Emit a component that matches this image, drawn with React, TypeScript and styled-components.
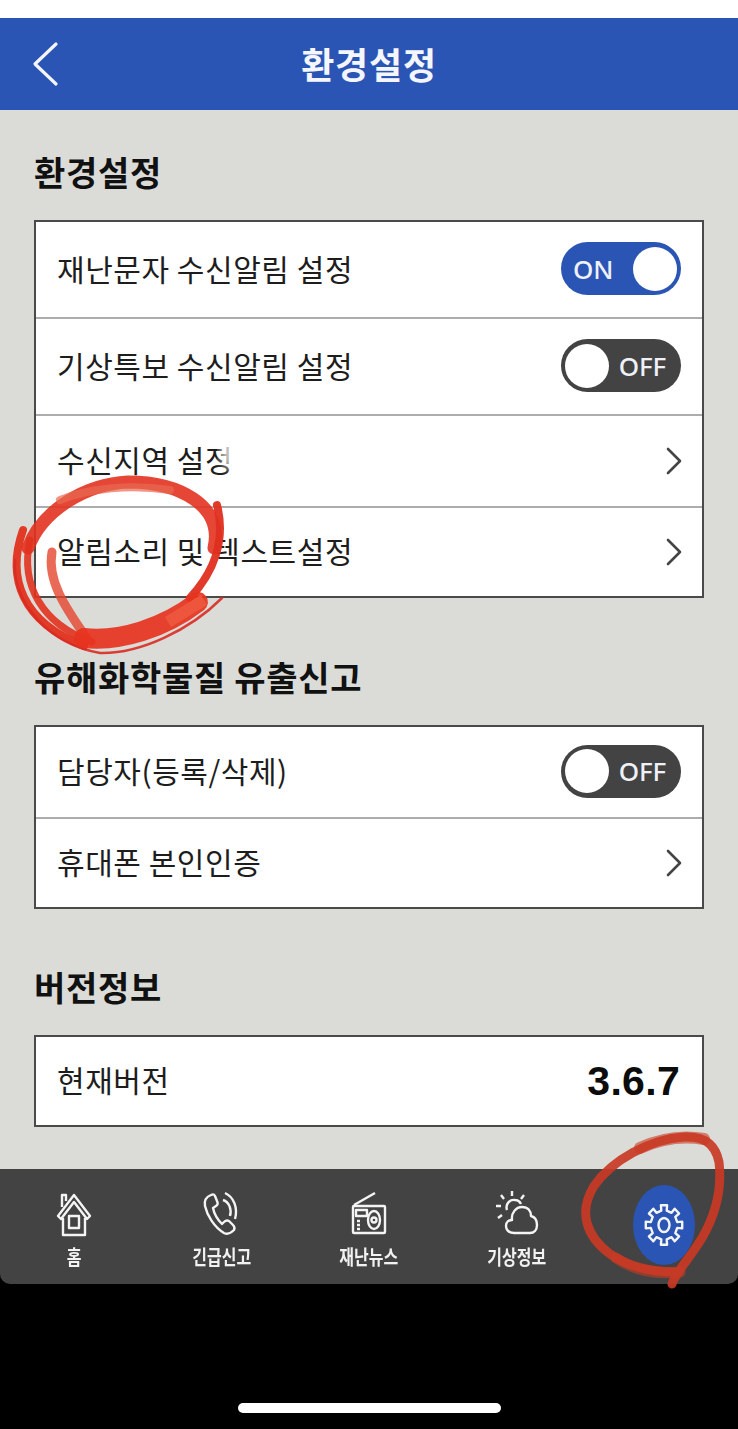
import styled, { createGlobalStyle } from "styled-components";

const GlobalStyle = createGlobalStyle`
  html, body {
    margin: 0;
    padding: 0;
    background: #000000;
  }
`

const Page = styled.div`
  position: relative;
  display: flex;
  flex-direction: column;
  width: 738px;
  height: 1429px;
  overflow: hidden;
  background: #000000;
  font-family: "Noto Sans CJK KR", "Noto Sans", sans-serif;
`

const StatusBar = styled.div`
  height: 18px;
  background: #ffffff;
`

const Header = styled.header`
  position: relative;
  display: flex;
  align-items: center;
  justify-content: center;
  height: 92px;
  background: #2b55b5;
`

const BackBtn = styled.button`
  position: absolute;
  left: 32px;
  top: 23px;
  display: flex;
  padding: 0;
  background: none;
  border: none;
`

const HeaderTitle = styled.h1`
  margin: 0 0 2px;
  font-size: 36px;
  font-weight: 700;
  letter-spacing: 0.8px;
  line-height: 1;
  color: #f4f6fb;
`

const Main = styled.main`
  display: flex;
  flex-direction: column;
  height: 1059px;
  padding: 0 34px;
  box-sizing: border-box;
  background: #dbdcd8;
`

const SectionTitle = styled.h2<{ $top: number }>`
  margin: ${(p) => p.$top}px 0 27px;
  height: 40px;
  font-size: 34px;
  font-weight: 700;
  line-height: 38px;
  letter-spacing: 0.7px;
  color: #111111;
`

const Card = styled.section`
  display: flex;
  flex-direction: column;
  border: 2px solid #4a4a4a;
  background: #ffffff;
`

const Row = styled.div<{ $height: number }>`
  display: flex;
  align-items: center;
  justify-content: space-between;
  height: ${(p) => p.$height}px;
  padding: 0 21px;
  border-top: 2px solid #acacac;

  &:first-child {
    border-top: none;
  }
`

const RowLabel = styled.span`
  position: relative;
  top: -2px;
  font-size: 30px;
  letter-spacing: 0.55px;
  color: #1d1d1d;
`

const Toggle = styled.div<{ $on: boolean }>`
  display: flex;
  flex-direction: ${(p) => (p.$on ? "row" : "row-reverse")};
  align-items: center;
  justify-content: space-between;
  box-sizing: border-box;
  width: 120px;
  height: 53px;
  margin-bottom: 2px;
  padding: ${(p) => (p.$on ? "0 4px 0 12px" : "0 15px 0 4px")};
  border-radius: 27px;
  background: ${(p) => (p.$on ? "#2b55b5" : "#434343")};
`

const ToggleText = styled.span`
  font-family: "Noto Sans", sans-serif;
  font-size: 26px;
  font-weight: 500;
  letter-spacing: -0.2px;
  color: #eef1f8;
`

const ToggleKnob = styled.span`
  width: 44px;
  height: 44px;
  border-radius: 50%;
  background: #ffffff;
`

const ChevronIcon = styled.svg`
  margin-right: -1px;
`

const Version = styled.span`
  font-family: "Liberation Sans", Arial, sans-serif;
  font-size: 41px;
  font-weight: 700;
  letter-spacing: 0.3px;
  margin-right: 1px;
  color: #0c0c0c;
`

const Nav = styled.nav`
  display: grid;
  grid-template-columns: repeat(5, 1fr);
  height: 115px;
  background: #434343;
  border-radius: 0 0 10px 10px;
`

const NavItem = styled.div`
  display: flex;
  flex-direction: column;
  align-items: center;
  box-sizing: border-box;
  padding-top: 20px;
  color: #ffffff;
`

const NavIcon = styled.svg`
  display: block;
  width: 48px;
  height: 48px;
  fill: none;
  stroke: #f4f4f4;
  stroke-width: 2.4;
  stroke-linejoin: round;
`

const NavLabel = styled.span`
  margin-top: 5px;
  font-size: 20px;
  font-weight: 700;
  line-height: 30px;
  white-space: nowrap;
  transform: scaleX(0.8);
  color: #f2f2f2;
`

const ActiveBadge = styled.div`
  display: flex;
  align-items: center;
  justify-content: center;
  width: 62px;
  height: 80px;
  margin-top: -4px;
  border-radius: 50%;
  background: #2b55b5;
`

const HomeBar = styled.div`
  flex: 1;
  display: flex;
  align-items: flex-end;
  justify-content: center;
  padding-bottom: 16px;
`

const HomeIndicator = styled.div`
  width: 263px;
  height: 10px;
  border-radius: 5px;
  background: #ffffff;
`

const Annotations = styled.svg`
  position: absolute;
  left: 0;
  top: 0;
  width: 738px;
  height: 1429px;
  fill: none;
  pointer-events: none;
  stroke-linecap: round;
`

function Chevron() {
  return (
    <ChevronIcon width="16" height="28" viewBox="0 0 16 28" fill="none">
      <polyline points="2,2 14,14 2,26" stroke="#444444" strokeWidth="2.6" strokeLinejoin="round" strokeLinecap="round" />
    </ChevronIcon>
  );
}

function Switch({ on }: { on: boolean }) {
  return (
    <Toggle $on={on}>
      <ToggleText>{on ? "ON" : "OFF"}</ToggleText>
      <ToggleKnob />
    </Toggle>
  );
}

/* 톱니바퀴 path 계산 */
function gearPath(cx: number, cy: number, outer: number, inner: number) {
  const teeth = 8;
  const pts: string[] = [];
  const step = (Math.PI * 2) / teeth;
  for (let i = 0; i < teeth; i++) {
    const a = i * step - Math.PI / 2;
    const offs: [number, number][] = [
      [inner, -0.2],
      [outer, -0.17],
      [outer, 0.17],
      [inner, 0.2],
    ];
    offs.forEach(([r, d]) => {
      pts.push(`${(cx + r * Math.cos(a + d)).toFixed(1)} ${(cy + r * Math.sin(a + d) * 1.08).toFixed(1)}`);
    });
  }
  return `M${pts.join("L")}Z`;
}

function HomeIcon() {
  return (
    <NavIcon viewBox="0 0 48 48">
      <path d="M8 27 L24 6 L40 27 L37 30 L24 13 L11 30 Z" />
      <path d="M12 18 V6 H16 V12" />
      <path d="M13 29 V46 H35 V29" />
      <rect x="19" y="27" width="10" height="12" />
    </NavIcon>
  );
}

function PhoneIcon() {
  return (
    <NavIcon viewBox="0 0 48 48">
      <path d="M14 6 C9 8 7 12 8 17 C10 26 17 38 27 44 C31 46 34 44 37 41 C38 39 38 38 36 36 L32 32 C30 31 29 31 27 33 L25 35 C21 31 17 24 16 19 L19 17 C21 16 21 14 20 12 L18 7 C17 5 16 5 14 6 Z" />
      <path d="M26 11 C32 13 35 20 33 27" />
      <path d="M28 4 C37 8 41 19 38 30" />
    </NavIcon>
  );
}

function RadioIcon() {
  return (
    <NavIcon viewBox="0 0 48 48">
      <rect x="8" y="17" width="32" height="27" rx="1" />
      <path d="M9 16 L30 4" />
      <rect x="11" y="21" width="11" height="6" />
      <ellipse cx="29" cy="31" rx="6" ry="9" />
      <circle cx="29" cy="31" r="2.5" />
      <path d="M12 32 H15 M12 36 H15 M12 40 H15" />
    </NavIcon>
  );
}

function WeatherIcon() {
  return (
    <NavIcon viewBox="0 0 48 48">
      <path d="M14 21 C12 15 17 10 22 11 C25 11 27 13 28 15" />
      <path d="M19 2 V7 M8 6 L11 10 M31 6 L28 10 M3 17 H8 M5 29 L9 26" />
      <path d="M21 44 C15 44 13 40 13 37 C13 33 16 31 19 31 C18 24 23 18 29 18 C35 18 38 22 38 27 C42 28 44 32 44 36 C44 41 41 44 37 44 Z" />
    </NavIcon>
  );
}

function GearIcon() {
  return (
    <NavIcon viewBox="0 0 48 48">
      <path d={gearPath(24, 24, 18.5, 13.5)} />
      <ellipse cx="24" cy="24" rx="5.5" ry="7" />
    </NavIcon>
  );
}

const NAV_ITEMS = [
  { label: "홈", icon: <HomeIcon /> },
  { label: "긴급신고", icon: <PhoneIcon /> },
  { label: "재난뉴스", icon: <RadioIcon /> },
  { label: "기상정보", icon: <WeatherIcon /> },
];

function App() {
  return (
    <Page>
      <GlobalStyle />
      <StatusBar />
      <Header>
        <BackBtn aria-label="뒤로">
          <svg width="28" height="46" viewBox="0 0 28 46" fill="none">
            <polyline points="24,3 3,23 24,43" stroke="#f4f6fb" strokeWidth="3.2" strokeLinecap="round" strokeLinejoin="round" />
          </svg>
        </BackBtn>
        <HeaderTitle>환경설정</HeaderTitle>
      </Header>

      <Main>
        <SectionTitle $top={43}>환경설정</SectionTitle>
        <Card>
          <Row $height={95}>
            <RowLabel>재난문자 수신알림 설정</RowLabel>
            <Switch on />
          </Row>
          <Row $height={95}>
            <RowLabel>기상특보 수신알림 설정</RowLabel>
            <Switch on={false} />
          </Row>
          <Row $height={90}>
            <RowLabel>수신지역 설정</RowLabel>
            <Chevron />
          </Row>
          <Row $height={88}>
            <RowLabel>알림소리 및 텍스트설정</RowLabel>
            <Chevron />
          </Row>
        </Card>

        <SectionTitle $top={60}>유해화학물질 유출신고</SectionTitle>
        <Card>
          <Row $height={90}>
            <RowLabel>담당자(등록/삭제)</RowLabel>
            <Switch on={false} />
          </Row>
          <Row $height={88}>
            <RowLabel>휴대폰 본인인증</RowLabel>
            <Chevron />
          </Row>
        </Card>

        <SectionTitle $top={59}>버전정보</SectionTitle>
        <Card>
          <Row $height={88}>
            <RowLabel>현재버전</RowLabel>
            <Version>3.6.7</Version>
          </Row>
        </Card>
      </Main>

      <Nav>
        {NAV_ITEMS.map((item) => (
          <NavItem key={item.label}>
            {item.icon}
            <NavLabel>{item.label}</NavLabel>
          </NavItem>
        ))}
        <NavItem>
          <ActiveBadge>
            <GearIcon />
          </ActiveBadge>
        </NavItem>
      </Nav>

      <HomeBar>
        <HomeIndicator />
      </HomeBar>

      {/* 사용자가 그린 빨간 표시 */}
      <Annotations viewBox="0 0 738 1429">
        <defs>
          <filter id="smudge">
            <feGaussianBlur stdDeviation="4" />
          </filter>
        </defs>
        <ellipse cx="232" cy="452" rx="12" ry="18" fill="#ffffff" opacity="0.75" filter="url(#smudge)" />
        <path d="M214 548 C224 505 178 482 128 482 C86 484 42 510 28 548" stroke="#e2321f" strokeWidth="13" opacity="0.9" />
        <path d="M217 505 C226 540 214 572 190 598" stroke="#df2f20" strokeWidth="8" opacity="0.95" />
        <path d="M60 500 C90 488 130 484 170 490" stroke="#ea6a52" strokeWidth="8" opacity="0.7" />
        <path d="M23 530 C6 578 22 622 84 646" stroke="#e2321f" strokeWidth="8" opacity="0.95" />
        <path d="M30 540 C20 585 42 624 92 642" stroke="#e2321f" strokeWidth="7" opacity="0.9" />
        <path d="M15 560 C12 604 50 644 100 653 C140 654 190 630 222 598" stroke="#d92b22" strokeWidth="2.5" opacity="0.9" />
        <path d="M52 552 C47 580 64 606 88 640" stroke="#e5452e" strokeWidth="9" opacity="0.8" />
        <path d="M84 638 C120 642 164 628 198 602" stroke="#e6331f" strokeWidth="20" opacity="0.92" />
        <path d="M168 622 L204 600" stroke="#ee5a40" strokeWidth="12" opacity="0.85" strokeLinecap="butt" />
        <path d="M672 1284 C676 1272 690 1258 702 1238 C716 1214 722 1188 719 1162 C715 1142 702 1136 684 1137 C650 1139 612 1160 594 1186 C578 1212 586 1236 610 1254 C630 1268 652 1272 676 1272" stroke="#c93a25" strokeWidth="9" opacity="0.92" />
        <path d="M640 1148 C660 1139 680 1135 704 1139" stroke="#c93a25" strokeWidth="12" opacity="0.6" />
        <path d="M616 1258 C634 1270 655 1275 680 1272" stroke="#c93a25" strokeWidth="11" opacity="0.6" />
      </Annotations>
    </Page>
  );
}

export default App;
